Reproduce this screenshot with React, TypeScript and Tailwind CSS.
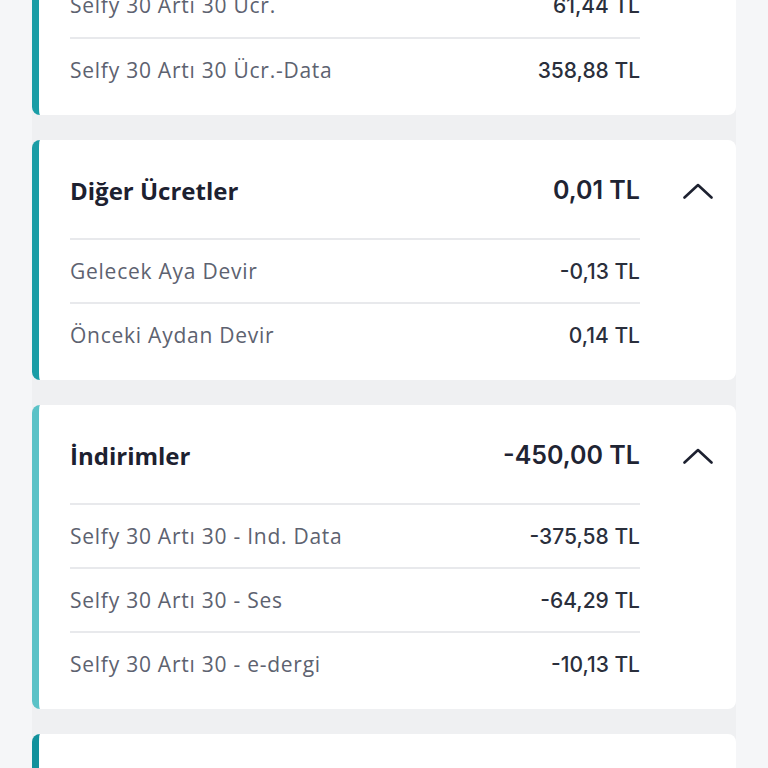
import { ReactNode } from 'react';

interface Row {
  label: string;
  value: string;
}

interface Section {
  title?: string;
  total?: string;
  accent: string;
  rows: Row[];
  className?: string;
}

function ChevronUp() {
  return (
    <svg width="30" height="16" viewBox="0 0 30 16" fill="none">
      <polyline
        points="1.5,14.5 15,2 28.5,14.5"
        stroke="#1d2130"
        strokeWidth="2.6"
        strokeLinecap="round"
        strokeLinejoin="round"
      />
    </svg>
  );
}

function Card({ title, total, accent, rows, className }: Section) {
  return (
    <div className={`bg-white rounded-lg border-l-[7px] pl-[31px] pb-[14px] ${accent} ${className ?? ''}`}>
      {title && (
        <div className="flex items-center h-[98px] pt-[3px]">
          <div className="flex-1 flex items-center justify-between">
            <span className="text-[24px] font-bold text-[#1d2130] font-['Open_Sans',sans-serif]">{title}</span>
            <span className="text-[25px] font-semibold text-[#1f2433] font-['Inter',sans-serif]">{total}</span>
          </div>
          <div className="w-[96px] pl-[43px] flex items-center">
            <ChevronUp />
          </div>
        </div>
      )}
      {rows.map((r, i) => (
        <RowItem key={r.label} first={!title && i === 0}>
          <span className="text-[21px] text-[#5d6270] font-['Open_Sans',sans-serif] tracking-[0.75px]">{r.label}</span>
          <span className="text-[21px] font-medium text-[#2a2f3c] font-['Inter',sans-serif]">{r.value}</span>
        </RowItem>
      ))}
    </div>
  );
}

function RowItem({ first, children }: { first: boolean; children: ReactNode }) {
  return (
    <div
      className={`flex items-center justify-between h-[64px] mr-[96px] pt-[2px] ${
        first ? 'border-t-0' : 'border-t-2 border-[#e8e9ec]'
      }`}
    >
      {children}
    </div>
  );
}

const sections: Section[] = [
  {
    accent: 'border-[#1a9da6]',
    className: 'mt-[-27px]',
    rows: [
      { label: 'Selfy 30 Artı 30 Ücr.', value: '61,44 TL' },
      { label: 'Selfy 30 Artı 30 Ücr.-Data', value: '358,88 TL' },
    ],
  },
  {
    title: 'Diğer Ücretler',
    total: '0,01 TL',
    accent: 'border-[#1a9da6]',
    rows: [
      { label: 'Gelecek Aya Devir', value: '-0,13 TL' },
      { label: 'Önceki Aydan Devir', value: '0,14 TL' },
    ],
  },
  {
    title: 'İndirimler',
    total: '-450,00 TL',
    accent: 'border-[#5bc2c7]',
    rows: [
      { label: 'Selfy 30 Artı 30 - Ind. Data', value: '-375,58 TL' },
      { label: 'Selfy 30 Artı 30 - Ses', value: '-64,29 TL' },
      { label: 'Selfy 30 Artı 30 - e-dergi', value: '-10,13 TL' },
    ],
  },
  {
    title: 'Toplam',
    total: '',
    accent: 'border-[#12919c]',
    rows: [],
  },
];

export default function App() {
  return (
    <div className="w-[768px] h-[768px] overflow-hidden bg-[#f5f6f8] px-8">
      <div className="flex flex-col gap-[25px] bg-[#eff0f2]">
        {sections.map((s, i) => (
          <Card key={i} {...s} />
        ))}
      </div>
    </div>
  );
}
